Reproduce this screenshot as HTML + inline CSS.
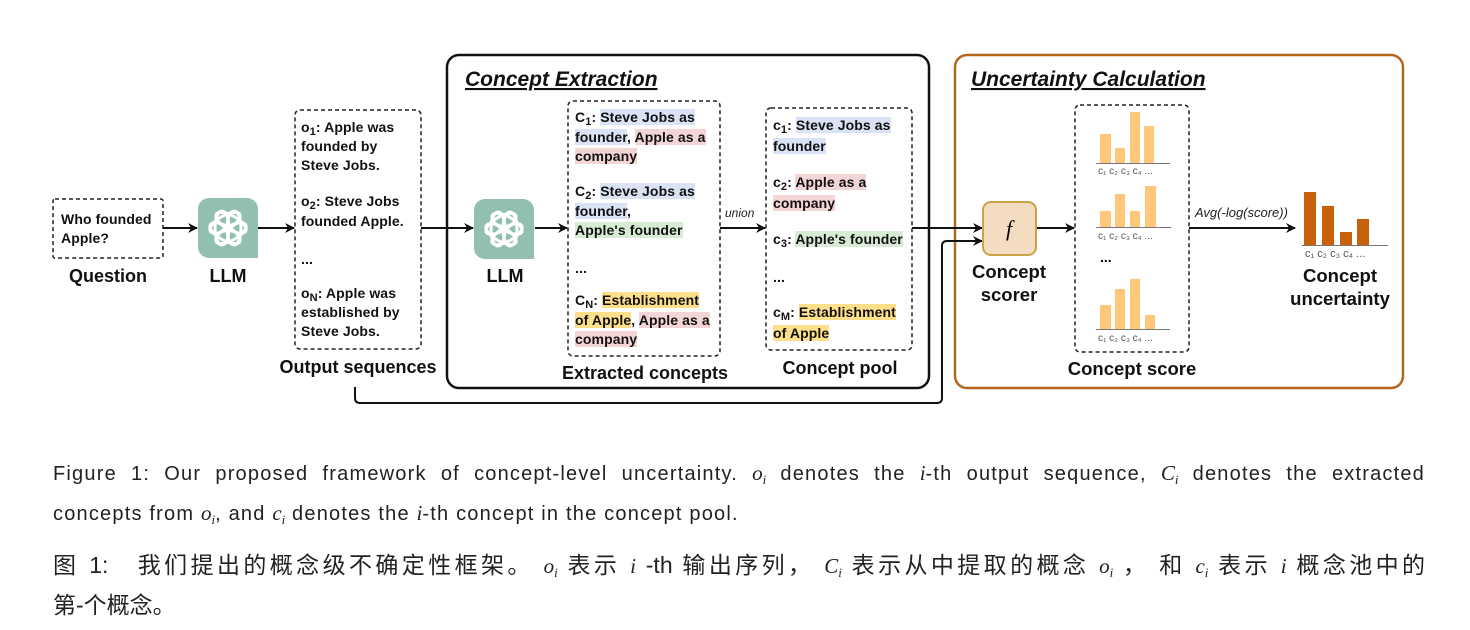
<!DOCTYPE html>
<html><head><meta charset="utf-8"><style>
body{margin:0;width:1470px;height:630px;background:#fff;position:relative;overflow:hidden;font-family:"Liberation Sans",sans-serif;}
.t{position:absolute;font:bold 14px/20px "Liberation Sans",sans-serif;color:#111;white-space:nowrap;letter-spacing:0.1px}
.lab{position:absolute;font:bold 18px/20px "Liberation Sans",sans-serif;color:#111;text-align:center;white-space:nowrap}
.b{background:#d9e3f5}.p{background:#f4d5d6}.g{background:#d8ecd5}.y{background:#ffdf8a}
sub{font-size:11px;vertical-align:-3px;line-height:0}
.cap{position:absolute;left:53px;width:1372px;font-family:"Liberation Sans",sans-serif;color:#222;font-size:20px;letter-spacing:1.2px;white-space:nowrap}
.j{text-align:justify;text-align-last:justify}
.m{font-family:"Liberation Serif",serif;font-style:italic;font-size:21px;letter-spacing:0}
.m sub{font-size:13px;vertical-align:-4px}
</style></head><body>
<svg width="1470" height="420" style="position:absolute;left:0;top:0" xmlns="http://www.w3.org/2000/svg">
<defs><marker id="a" markerWidth="10" markerHeight="10" refX="9" refY="5" orient="auto" markerUnits="userSpaceOnUse"><path d="M0,0 L10,5 L0,10 L3,5z" fill="#111"/></marker>
<g id="logo"><rect x="0" y="0" width="60" height="60" rx="11" fill="#93bfae"/><path d="M48,60 L60,48 L60,60z" fill="#93bfae"/>
<g fill="none" stroke="#fff" stroke-width="3" transform="translate(30,30)">
<ellipse rx="7" ry="17" transform="rotate(0) translate(6,0)"/><ellipse rx="7" ry="17" transform="rotate(60) translate(6,0)"/><ellipse rx="7" ry="17" transform="rotate(120) translate(6,0)"/>
<ellipse rx="7" ry="17" transform="rotate(180) translate(6,0)"/><ellipse rx="7" ry="17" transform="rotate(240) translate(6,0)"/><ellipse rx="7" ry="17" transform="rotate(300) translate(6,0)"/></g></g></defs>
<g fill="none" stroke="#222" stroke-width="1.5" stroke-dasharray="4,3">
<rect x="53" y="199" width="110" height="59" rx="2"/>
<rect x="295" y="110" width="126" height="239" rx="5"/>
<rect x="568" y="101" width="152" height="255" rx="5"/>
<rect x="766" y="108" width="146" height="242" rx="5"/>
<rect x="1075" y="105" width="114" height="247" rx="5"/>
</g>
<rect x="447" y="55" width="482" height="333" rx="12" fill="none" stroke="#111" stroke-width="2.5"/>
<rect x="955" y="55" width="448" height="333" rx="12" fill="none" stroke="#b5661c" stroke-width="2.5"/>
<use href="#logo" x="198" y="198"/><use href="#logo" x="474" y="199"/>
<g stroke="#111" stroke-width="2" fill="none" marker-end="url(#a)">
<line x1="163" y1="228" x2="197" y2="228"/><line x1="258" y1="228" x2="294" y2="228"/>
<line x1="421" y1="228" x2="473" y2="228"/><line x1="535" y1="228" x2="567" y2="228"/>
<line x1="720" y1="228" x2="765" y2="228"/><line x1="912" y1="228" x2="982" y2="228"/>
<path d="M355,387 L355,398 Q355,403 360,403 L937,403 Q942,403 942,398 L942,246 Q942,241 947,241 L982,241"/>
<line x1="1036" y1="228" x2="1074" y2="228"/><line x1="1189" y1="228" x2="1295" y2="228"/>
</g>
<rect x="983" y="202" width="53" height="53" rx="8" fill="#f3dcc0" stroke="#c9a24a" stroke-width="2"/>
<text x="1009" y="236" font-family="Liberation Serif" font-style="italic" font-size="22" text-anchor="middle">f</text>
<g font-family="Liberation Sans" font-weight="bold" font-style="italic" font-size="21" text-decoration="underline" fill="#111">
<text x="465" y="86">Concept Extraction</text><text x="971" y="86">Uncertainty Calculation</text></g>
<text x="725" y="217" font-family="Liberation Sans" font-style="italic" font-size="12" fill="#222">union</text>
<text x="1195" y="217" font-family="Liberation Sans" font-style="italic" font-size="13" fill="#222">Avg(-log(score))</text>
<g fill="#fec77a">
<rect x="1100" y="134" width="11" height="29"/><rect x="1115" y="148" width="10" height="15"/><rect x="1130" y="112" width="10" height="51"/><rect x="1144" y="126" width="10" height="37"/>
<rect x="1100" y="211" width="11" height="16"/><rect x="1115" y="194" width="10" height="33"/><rect x="1130" y="211" width="10" height="16"/><rect x="1145" y="186" width="11" height="41"/>
<rect x="1100" y="305" width="11" height="24"/><rect x="1115" y="289" width="10" height="40"/><rect x="1130" y="279" width="10" height="50"/><rect x="1145" y="315" width="10" height="14"/>
</g>
<g fill="#c8620a"><rect x="1304" y="192" width="12" height="53"/><rect x="1322" y="206" width="12" height="39"/><rect x="1340" y="232" width="12" height="13"/><rect x="1357" y="219" width="12" height="26"/></g>
<g stroke="#777" stroke-width="1"><line x1="1096" y1="163.5" x2="1170" y2="163.5"/><line x1="1096" y1="227.5" x2="1171" y2="227.5"/><line x1="1096" y1="329.5" x2="1170" y2="329.5"/><line x1="1302" y1="245.5" x2="1388" y2="245.5"/></g>
<g font-family="Liberation Sans" font-size="10" fill="#555">
<text x="1098" y="174">c₁ c₂ c₃ c₄ ...</text><text x="1098" y="239">c₁ c₂ c₃ c₄ ...</text><text x="1098" y="341">c₁ c₂ c₃ c₄ ...</text>
<text x="1305" y="257" font-size="11">c₁  c₂  c₃  c₄    ...</text></g>
<text x="1100" y="262" font-family="Liberation Sans" font-weight="bold" font-size="14">...</text>
</svg>
<div class="t" style="left:61px;top:210px;line-height:19px">Who founded<br>Apple?</div>
<div class="lab" style="left:58px;top:266px;width:100px">Question</div>
<div class="lab" style="left:198px;top:266px;width:60px">LLM</div>
<div class="lab" style="left:475px;top:266px;width:60px">LLM</div>
<div class="t" style="left:301px;top:118px;line-height:19px">o<sub>1</sub>: Apple was<br>founded by<br>Steve Jobs.</div>
<div class="t" style="left:301px;top:191px">o<sub>2</sub>: Steve Jobs<br>founded Apple.</div>
<div class="t" style="left:301px;top:249px">...</div>
<div class="t" style="left:301px;top:284px;line-height:19px">o<sub>N</sub>: Apple was<br>established by<br>Steve Jobs.</div>
<div class="lab" style="left:268px;top:357px;width:180px">Output sequences</div>
<div class="t" style="left:575px;top:108px;line-height:19.5px">C<sub>1</sub>: <span class="b">Steve Jobs as</span><br><span class="b">founder</span>, <span class="p">Apple as a</span><br><span class="p">company</span></div>
<div class="t" style="left:575px;top:182px;line-height:19.5px">C<sub>2</sub>: <span class="b">Steve Jobs as</span><br><span class="b">founder</span>,<br><span class="g">Apple's founder</span></div>
<div class="t" style="left:575px;top:258px">...</div>
<div class="t" style="left:575px;top:291px;line-height:19.5px">C<sub>N</sub>: <span class="y">Establishment</span><br><span class="y">of Apple</span>, <span class="p">Apple as a</span><br><span class="p">company</span></div>
<div class="lab" style="left:550px;top:363px;width:190px">Extracted concepts</div>
<div class="t" style="left:773px;top:115px;line-height:21px">c<sub>1</sub>: <span class="b">Steve Jobs as</span><br><span class="b">founder</span></div>
<div class="t" style="left:773px;top:172px;line-height:21px">c<sub>2</sub>: <span class="p">Apple as a</span><br><span class="p">company</span></div>
<div class="t" style="left:773px;top:229px">c<sub>3</sub>: <span class="g">Apple's founder</span></div>
<div class="t" style="left:773px;top:267px">...</div>
<div class="t" style="left:773px;top:302px;line-height:21px">c<sub>M</sub>: <span class="y">Establishment</span><br><span class="y">of Apple</span></div>
<div class="lab" style="left:760px;top:358px;width:160px">Concept pool</div>
<div class="lab" style="left:954px;top:260px;width:110px;line-height:23px;font-size:18.5px">Concept<br>scorer</div>
<div class="lab" style="left:1047px;top:359px;width:170px;font-size:18.5px">Concept score</div>
<div class="lab" style="left:1265px;top:264px;width:150px;line-height:23px;font-size:18.5px">Concept<br>uncertainty</div>
<div class="cap j" style="top:453px;line-height:40px">Figure 1: Our proposed framework of concept-level uncertainty. <span class="m">o<sub>i</sub></span> denotes the <span class="m">i</span>-th output sequence, <span class="m">C<sub>i</sub></span> denotes the extracted</div>
<div class="cap" style="top:493px;line-height:40px">concepts from <span class="m">o<sub>i</sub></span>, and <span class="m">c<sub>i</sub></span> denotes the <span class="m">i</span>-th concept in the concept pool.</div>
<div class="cap j" style="top:545px;line-height:40px;font-size:23px;letter-spacing:0;font-family:'Liberation Sans','Noto Sans CJK SC',sans-serif">图 1:&nbsp;&nbsp; 我们提出的概念级不确定性框架。 <span class="m">o<sub>i</sub></span> 表示 <span class="m">i</span> -th 输出序列， <span class="m">C<sub>i</sub></span> 表示从中提取的概念 <span class="m">o<sub>i</sub></span> ， 和 <span class="m">c<sub>i</sub></span> 表示 <span class="m">i</span> 概念池中的</div>
<div class="cap" style="top:585px;line-height:40px;font-size:23px;letter-spacing:0;font-family:'Liberation Sans','Noto Sans CJK SC',sans-serif">第-个概念。</div>
</body></html>
